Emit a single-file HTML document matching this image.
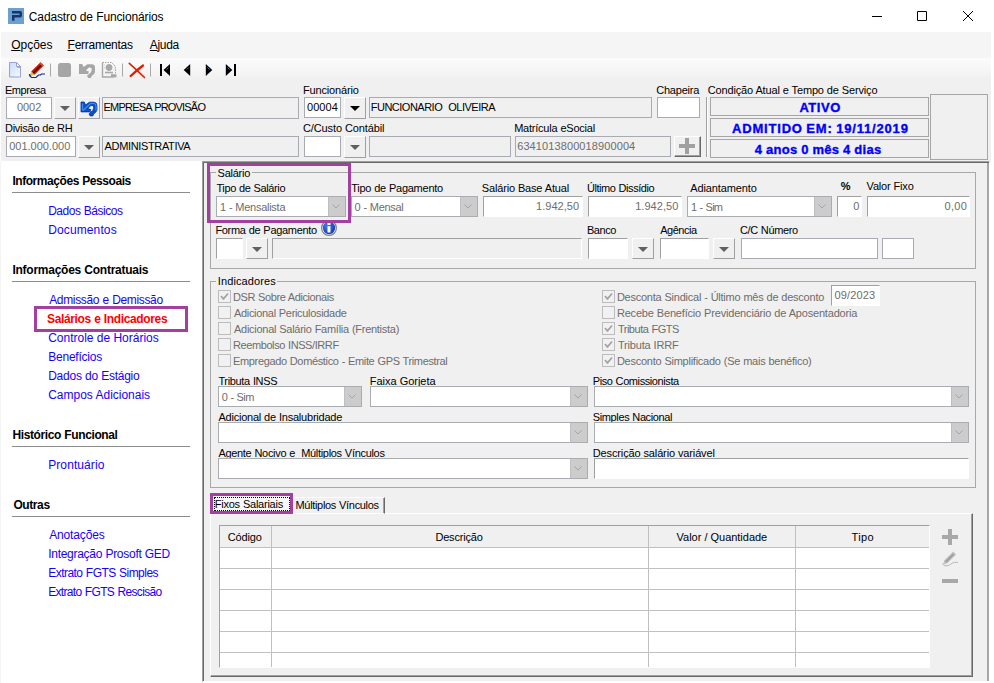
<!DOCTYPE html>
<html lang="pt-BR">
<head>
<meta charset="utf-8">
<title>Cadastro de Funcionários</title>
<style>
html,body{margin:0;padding:0}
body{width:994px;height:683px;position:relative;overflow:hidden;background:#fff;font-family:"Liberation Sans",sans-serif;font-size:11px;color:#000}
.a{position:absolute;box-sizing:border-box}
.t{position:absolute;white-space:pre;font-size:11px;line-height:13px}
.s{position:absolute;white-space:pre;font-size:12px;line-height:15px}
.f{position:absolute;box-sizing:border-box;background:#fff;border:1px solid #a9abb2;height:21px}
.h22{height:22px}
.g{background:#f0f0f0}
.w{border-color:#a0a0a0 #fff #fff #a0a0a0;height:21px}
.e{height:21px}
.gr{color:#6d6d6d}
.b{position:absolute;box-sizing:border-box;background:#f0f0f0;border:1px solid;border-color:#fff #a0a0a0 #a0a0a0 #fff;height:22px;width:22px}
.b i{position:absolute;left:5.3px;top:8px;width:0;height:0;border-left:5.2px solid transparent;border-right:5.2px solid transparent;border-top:5.2px solid #606060}
.b i.k{border-top-color:#000}
.cb{position:absolute;box-sizing:border-box;background:#fff;border:1px solid #a9adb2;height:21px}
.cb u{position:absolute;right:0;top:0;width:17px;height:19px;background:#cccccc;border-left:1px solid #bfbfbf;box-sizing:border-box}
.cb u svg{position:absolute;left:3px;top:7px}
.gb{position:absolute;box-sizing:border-box;border:1px solid #a8a8a8}
.gl{position:absolute;background:#f0f0f0;height:13px}
.ck{position:absolute;box-sizing:border-box;width:13px;height:13px;border:1px solid #bcbcbc;background:#f1f1f1}
.nav{color:#1800fa}
.hd{font-weight:bold}
.hl{position:absolute;height:1px;background:#8c8c8c;left:12px;width:178px}
.st{position:absolute;box-sizing:border-box;width:219px;height:19px;border:1px solid #a6a6a6;left:710px}
.sb{font-weight:bold;font-size:13px;line-height:17px;color:#0000ff;-webkit-text-stroke:0.35px #0000ff}
.pb{position:absolute;box-sizing:border-box;border:3px solid #a23fa0}
</style>
</head>
<body>
<div class="a" style="left:0;top:0;width:994px;height:32px;background:#fff"></div>
<svg class="a" style="left:8px;top:8px" width="16" height="16" viewBox="0 0 16 16"><rect width="16" height="16" fill="#6c9fd2"/><path d="M4 3h8a2 2 0 0 1 2 2v2.500a2 2 0 0 1-2 2H6.500v3.300H4V7h7.500V5.600H4z" fill="#17356e"/></svg>
<div class="s" style="left:28.8px;top:10px;letter-spacing:-0.13px;word-spacing:0.13px">Cadastro de Funcionários</div>
<svg class="a" style="left:860px;top:0" width="134" height="32" viewBox="0 0 134 32"><path d="M12 16.500h10M57.500 11.500h9v9h-9zM103 11l10 10M113 11l-10 10" stroke="#000" stroke-width="1" fill="none"/></svg>
<div class="a" style="left:1px;top:32px;width:990px;height:26px;background:#f5f5f5"></div>
<div class="s" style="left:11.2px;top:38px;letter-spacing:-0.02px"><span style="text-decoration:underline">O</span>pções</div>
<div class="s" style="left:67.6px;top:38px;letter-spacing:-0.26px"><span style="text-decoration:underline">F</span>erramentas</div>
<div class="s" style="left:149.8px;top:38px;letter-spacing:-0.32px"><span style="text-decoration:underline">A</span>juda</div>
<div class="a" style="left:1px;top:58px;width:990px;height:103px;background:linear-gradient(#fcfcfc 0,#f0f0f0 22px)"></div>
<svg class="a" style="left:0;top:58px" width="250" height="24" viewBox="0 58 250 24">
<defs><linearGradient id="pg" x1="0" y1="0" x2="1" y2="1"><stop offset="0" stop-color="#c6dcfc"/><stop offset="1" stop-color="#f6f9ff"/></linearGradient></defs>
<path d="M9.500 62.500h7l4 4v10.500h-11z" fill="url(#pg)" stroke="#98a2cc"/><path d="M16.500 62.500v4h4z" fill="#fff" stroke="#98a2cc"/><path d="M17 67.500h3" stroke="#a8b4c8"/>
<path d="M40.500 62.200l3.300 3.300l-9.300 9.300l-3.300-3.300z" fill="#c81800"/><path d="M41.800 63.500l1 1l-9.300 9.300l-1-1z" fill="#401000"/><path d="M40.500 62.200l3.300 3.300l-1.200 1.200l-3.300-3.300z" fill="#e05040"/><path d="M31.200 71.500l3.300 3.300l-4.500 1.300z" fill="#e8c020"/>
<path d="M29.500 75.500l2 2h4.500l2.500-2.500h2l1-1h3.500" fill="none" stroke="#0828a0" stroke-width="1.100"/><path d="M29 74.500l1.500 1" stroke="#000" stroke-width="1.200"/>
<path d="M50.500 63.500v13M122.500 63.500v13M150.500 63.500v13" stroke="#a8a8a8"/>
<rect x="58" y="63" width="13" height="14" rx="2.500" fill="#a6a6a6"/>
<path transform="translate(79 64)" d="M0 0L3.200 0L4.600 3L8.400 0.200L12.900 0.200Q16 0.500 16 3.500L16 8Q15.500 10 12.900 11.800L11.800 13.900L9.100 13.900L8 11.800L11.800 8.400Q13.500 6 12.500 4Q11 3 9.500 3.800L6.900 6.500L9.900 7.600L9.100 9.900L0 9.900Z" fill="#a6a6a6"/>
<g stroke="#a8a8a8" fill="none"><path d="M102.500 62.500h9l4 4v7" stroke-dasharray="1.500 1"/><path d="M102.500 62.500v14.500h11" stroke-width="1.400"/><circle cx="109" cy="67.500" r="3" fill="#a8a8a8"/><path d="M105 72.500h8" stroke-width="1.600"/><path d="M111 75.500l5.500 0.500" stroke-width="3"/><path d="M104 65h1M104 68h1M113 64.500h1M113.500 69h1" stroke="#c8c8c8"/></g>
<path d="M129.300 63.300c4 3.500 9.500 8.500 15.200 14.200" stroke="#e41c00" stroke-width="1.600" fill="none" stroke-linecap="round"/><path d="M143 65.500c-4 3-8 6.500-12.300 10.500" stroke="#e41c00" stroke-width="2.300" fill="none" stroke-linecap="round"/>
<g fill="#000"><rect x="160" y="64" width="2" height="12"/><path d="M163.500 70l6.500-6v12z"/><path d="M183.700 70l6.500-6v12z"/><path d="M212.300 70l-6.500-6v12z"/><path d="M232.300 70l-6.500-6v12z"/><rect x="234" y="64" width="2" height="12"/></g>
<g stroke="#5090e0" stroke-width="0.800"><path d="M166.500 69.500l2-2M186.700 69.500l2-2M209.500 69.500l-2-2M229.500 69.500l-2-2"/></g>
</svg>
<div class="t" style="left:5px;top:84px;letter-spacing:-0.47px">Empresa</div>
<div class="f h22" style="left:6px;top:97px;width:46px"></div>
<div class="t gr" style="left:17px;top:101px;letter-spacing:-0.07px">0002</div>
<div class="b" style="left:54px;top:97px"><i></i></div>
<div class="b" style="left:78px;top:97px"><svg style="position:absolute;left:1px;top:3px" width="18" height="16" viewBox="-1 -1 18 16"><path d="M0 0L3.200 0L4.600 3L8.400 0.200L12.900 0.200Q16 0.500 16 3.500L16 8Q15.500 10 12.900 11.800L11.800 13.900L9.100 13.900L8 11.800L11.800 8.400Q13.500 6 12.500 4Q11 3 9.500 3.800L6.900 6.500L9.900 7.600L9.100 9.900L0 9.900Z" fill="#0a50c8" stroke="#0034a4" stroke-width="0.800"/><path d="M1.500 1.500v7M2 8.500l7.500-7h3.500q2 0.500 2 2.500v4.500" stroke="#3c90f0" stroke-width="1.200" fill="none"/></svg></div>
<div class="f g h22" style="left:102px;top:97px;width:197px"></div>
<div class="t" style="left:103.6px;top:101px;letter-spacing:-0.81px;word-spacing:0.81px">EMPRESA PROVISÃO</div>
<div class="t" style="left:303px;top:84px;letter-spacing:-0.17px">Funcionário</div>
<div class="f" style="left:304px;top:97px;width:37px"></div>
<div class="t" style="left:307px;top:101px;letter-spacing:0.05px">00004</div>
<div class="b" style="left:344px;top:97px"><i class="k"></i></div>
<div class="f g" style="left:369px;top:97px;width:283px"></div>
<div class="t" style="left:370.8px;top:101px;letter-spacing:-0.51px;word-spacing:0.51px">FUNCIONARIO  OLIVEIRA</div>
<div class="t" style="left:656.2px;top:84px;letter-spacing:-0.21px">Chapeira</div>
<div class="f" style="left:657px;top:97px;width:43px"></div>
<div class="t" style="left:5px;top:122px;letter-spacing:-0.26px;word-spacing:0.26px">Divisão de RH</div>
<div class="f" style="left:6px;top:136px;width:70px"></div>
<div class="t gr" style="left:9.2px;top:140px">001.000.000</div>
<div class="b" style="left:78px;top:136px"><i></i></div>
<div class="f g" style="left:102px;top:136px;width:197px"></div>
<div class="t" style="left:104.6px;top:140px;letter-spacing:-0.35px">ADMINISTRATIVA</div>
<div class="t" style="left:303px;top:122px;letter-spacing:-0.12px;word-spacing:0.12px">C/Custo Contábil</div>
<div class="f" style="left:304px;top:136px;width:37px"></div>
<div class="b" style="left:344px;top:136px"><i></i></div>
<div class="f g" style="left:369px;top:136px;width:142px"></div>
<div class="t" style="left:514.2px;top:122px;letter-spacing:-0.23px;word-spacing:0.23px">Matrícula eSocial</div>
<div class="f g" style="left:515px;top:136px;width:156px"></div>
<div class="t gr" style="left:517.2px;top:140px;letter-spacing:0.1px">6341013800018900004</div>
<div class="b" style="left:674px;top:136px;width:27px;height:21px;border-color:#fff #696969 #696969 #fff;box-shadow:inset -1px -1px 0 #a0a0a0"><svg style="position:absolute;left:4px;top:1px" width="16" height="16" viewBox="0 0 16 16"><path d="M6 0h4v6h6v4h-6v6H6v-6H0V6h6z" fill="#a0a0a0"/></svg></div>
<div class="t" style="left:707.8px;top:84px;letter-spacing:-0.16px;word-spacing:0.16px">Condição Atual e Tempo de Serviço</div>
<div class="a" style="left:706px;top:97px;width:2px;height:60px;border-left:1px solid #a0a0a0;border-right:1px solid #fff"></div>
<div class="st" style="top:97px"></div>
<div class="t sb" style="left:799.4px;top:99px;letter-spacing:0.55px">ATIVO</div>
<div class="st" style="top:118px"></div>
<div class="t sb" style="left:732px;top:120px;letter-spacing:0.81px;word-spacing:-0.81px">ADMITIDO EM: 19/11/2019</div>
<div class="st" style="top:139px"></div>
<div class="t sb" style="left:754.8px;top:141px;letter-spacing:0.33px;word-spacing:-0.33px">4 anos 0 mês 4 dias</div>
<div class="a" style="left:930px;top:94px;width:58px;height:66px;border:1px solid #a6a6a6"></div>
<div class="a" style="left:0;top:161px;width:1px;height:522px;background:#f4f4f4"></div>
<div class="s hd" style="left:12.4px;top:174px;letter-spacing:-0.44px;word-spacing:0.44px">Informações Pessoais</div>
<div class="hl" style="top:192px"></div>
<div class="s nav" style="left:48.2px;top:204px;letter-spacing:-0.48px;word-spacing:0.48px">Dados Básicos</div>
<div class="s nav" style="left:48.2px;top:223px;letter-spacing:0.12px">Documentos</div>
<div class="s hd" style="left:12.4px;top:263px;letter-spacing:-0.25px;word-spacing:0.25px">Informações Contratuais</div>
<div class="hl" style="top:281px"></div>
<div class="s nav" style="left:49.2px;top:293px;letter-spacing:-0.34px;word-spacing:0.34px">Admissão e Demissão</div>
<div class="pb" style="left:34px;top:306px;width:154px;height:26px"></div>
<div class="s" style="left:47px;top:312px;letter-spacing:-0.36px;word-spacing:0.36px;color:#f00;font-weight:bold">Salários e Indicadores</div>
<div class="s nav" style="left:48.2px;top:331px;letter-spacing:-0.01px;word-spacing:0.01px">Controle de Horários</div>
<div class="s nav" style="left:48.2px;top:350px;letter-spacing:-0.22px">Benefícios</div>
<div class="s nav" style="left:48.2px;top:369px;letter-spacing:-0.25px;word-spacing:0.25px">Dados do Estágio</div>
<div class="s nav" style="left:48.2px;top:388px;letter-spacing:-0.01px;word-spacing:0.01px">Campos Adicionais</div>
<div class="s hd" style="left:12.4px;top:428px;letter-spacing:-0.38px;word-spacing:0.38px">Histórico Funcional</div>
<div class="hl" style="top:446px"></div>
<div class="s nav" style="left:48.2px;top:458px;letter-spacing:0.09px">Prontuário</div>
<div class="s hd" style="left:13.4px;top:498px;letter-spacing:-0.4px">Outras</div>
<div class="hl" style="top:516px"></div>
<div class="s nav" style="left:49.2px;top:528px;letter-spacing:-0.15px">Anotações</div>
<div class="s nav" style="left:48.2px;top:547px;letter-spacing:-0.28px;word-spacing:0.28px">Integração Prosoft GED</div>
<div class="s nav" style="left:48.2px;top:566px;letter-spacing:-0.53px;word-spacing:0.53px">Extrato FGTS Simples</div>
<div class="s nav" style="left:48.2px;top:585px;letter-spacing:-0.67px;word-spacing:0.67px">Extrato FGTS Rescisão</div>
<div class="a" style="left:202px;top:161px;width:788px;height:521px;background:#f0f0f0;border:1px solid;border-color:#a0a0a0 #fff #fff #a0a0a0;box-shadow:inset 1px 1px 0 #696969"></div><div class="a" style="left:987px;top:163px;width:2px;height:518px;background:#a6a6a6"></div>
<div class="gb" style="left:210px;top:172px;width:766px;height:97px"></div>
<div class="gl" style="left:216px;top:167px;width:36px"></div>
<div class="t" style="left:217.6px;top:167px;letter-spacing:-0.25px">Salário</div>
<div class="t" style="left:216.4px;top:182px;letter-spacing:-0.37px;word-spacing:0.37px">Tipo de Salário</div>
<div class="cb" style="left:216px;top:196px;width:130px"><u><svg width="9" height="5" viewBox="0 0 9 5"><path d="M0.500 0.500l3.500 3.500l3.500-3.500" stroke="#a2a6ac" fill="none" stroke-width="1"/></svg></u></div>
<div class="t gr" style="left:220px;top:201px;letter-spacing:-0.27px;word-spacing:0.27px">1 - Mensalista</div>
<div class="t" style="left:351.2px;top:182px;letter-spacing:-0.26px;word-spacing:0.26px">Tipo de Pagamento</div>
<div class="cb" style="left:351px;top:196px;width:127px"><u><svg width="9" height="5" viewBox="0 0 9 5"><path d="M0.500 0.500l3.500 3.500l3.500-3.500" stroke="#a2a6ac" fill="none" stroke-width="1"/></svg></u></div>
<div class="t gr" style="left:354.6px;top:201px;letter-spacing:-0.31px;word-spacing:0.31px">0 - Mensal</div>
<div class="t" style="left:481.8px;top:182px;letter-spacing:-0.17px;word-spacing:0.17px">Salário Base Atual</div>
<div class="f w" style="left:483px;top:196px;width:100px"></div>
<div class="t gr" style="left:536px;top:200px;letter-spacing:0.04px">1.942,50</div>
<div class="t" style="left:586.9px;top:182px;letter-spacing:-0.43px;word-spacing:0.43px">Último Dissídio</div>
<div class="f w" style="left:588px;top:196px;width:94px"></div>
<div class="t gr" style="left:635.2px;top:200px;letter-spacing:0.04px">1.942,50</div>
<div class="t" style="left:690.2px;top:182px;letter-spacing:-0.11px">Adiantamento</div>
<div class="cb" style="left:687px;top:196px;width:145px"><u><svg width="9" height="5" viewBox="0 0 9 5"><path d="M0.500 0.500l3.500 3.500l3.500-3.500" stroke="#a2a6ac" fill="none" stroke-width="1"/></svg></u></div>
<div class="t gr" style="left:691px;top:201px;letter-spacing:-0.7px;word-spacing:0.7px">1 - Sim</div>
<div class="t" style="left:840.8px;top:180px;font-weight:bold">%</div>
<div class="f w" style="left:837px;top:196px;width:25px"></div>
<div class="t gr" style="left:853.2px;top:200px">0</div>
<div class="t" style="left:866.6px;top:180px;letter-spacing:-0.19px;word-spacing:0.19px">Valor Fixo</div>
<div class="f w" style="left:867px;top:196px;width:103px"></div>
<div class="t gr" style="left:944.6px;top:200px;letter-spacing:0.27px">0,00</div>
<div class="t" style="left:215.4px;top:224px;letter-spacing:-0.31px;word-spacing:0.31px">Forma de Pagamento</div>
<svg class="a" style="left:321px;top:220px" width="16" height="16" viewBox="0 0 16 16"><defs><radialGradient id="ig" cx="0.350" cy="0.300" r="0.800"><stop offset="0" stop-color="#4478e8"/><stop offset="1" stop-color="#1238b0"/></radialGradient></defs><circle cx="8" cy="8" r="7.400" fill="#fff" stroke="#808080" stroke-width="1.200"/><circle cx="8" cy="8" r="6.200" fill="url(#ig)"/><rect x="6.500" y="6.200" width="3" height="6.300" fill="#fff"/><rect x="6.500" y="3" width="3" height="2" fill="#fff"/></svg>
<div class="f w" style="left:216px;top:238px;width:27px"></div>
<div class="b" style="left:246px;top:238px;height:21px"><i></i></div>
<div class="f w g" style="left:272px;top:238px;width:310px"></div>
<div class="t" style="left:586.9px;top:224px;letter-spacing:-0.42px">Banco</div>
<div class="f w" style="left:588px;top:238px;width:40px"></div>
<div class="b" style="left:632px;top:238px;height:21px"><i></i></div>
<div class="t" style="left:660.2px;top:224px;letter-spacing:-0.47px">Agência</div>
<div class="f w" style="left:660px;top:238px;width:49px"></div>
<div class="b" style="left:713px;top:238px;height:21px"><i></i></div>
<div class="t" style="left:739.9px;top:224px;letter-spacing:-0.36px;word-spacing:0.36px">C/C Número</div>
<div class="f e" style="left:741px;top:238px;width:137px"></div>
<div class="f e" style="left:882px;top:238px;width:32px"></div>
<div class="pb" style="left:207px;top:163px;width:144px;height:60px"></div>
<div class="gb" style="left:210px;top:281px;width:766px;height:207px"></div>
<div class="gl" style="left:216px;top:275px;width:61px"></div>
<div class="t" style="left:217.8px;top:275px;letter-spacing:0.1px">Indicadores</div>
<div class="ck" style="left:218px;top:290px"><svg width="11" height="11" viewBox="0 0 11 11" style="position:absolute;left:0;top:0"><path d="M2 5.200l2.500 2.600l4.500-5.300" stroke="#a4a4a4" stroke-width="1.800" fill="none"/></svg></div>
<div class="t gr" style="left:233px;top:291px;letter-spacing:-0.41px;word-spacing:0.41px">DSR Sobre Adicionais</div>
<div class="ck" style="left:218px;top:306px"></div>
<div class="t gr" style="left:234px;top:307px;letter-spacing:-0.32px;word-spacing:0.32px">Adicional Periculosidade</div>
<div class="ck" style="left:218px;top:322px"></div>
<div class="t gr" style="left:234px;top:323px;letter-spacing:-0.27px;word-spacing:0.27px">Adicional Salário Família (Frentista)</div>
<div class="ck" style="left:218px;top:338px"></div>
<div class="t gr" style="left:233px;top:339px;letter-spacing:-0.41px;word-spacing:0.41px">Reembolso INSS/IRRF</div>
<div class="ck" style="left:218px;top:354px"></div>
<div class="t gr" style="left:233px;top:355px;letter-spacing:-0.35px;word-spacing:0.35px">Empregado Doméstico - Emite GPS Trimestral</div>
<div class="ck" style="left:602px;top:290px"><svg width="11" height="11" viewBox="0 0 11 11" style="position:absolute;left:0;top:0"><path d="M2 5.200l2.500 2.600l4.500-5.300" stroke="#a4a4a4" stroke-width="1.800" fill="none"/></svg></div>
<div class="t gr" style="left:616.9px;top:291px;letter-spacing:-0.24px;word-spacing:0.24px">Desconta Sindical - Último mês de desconto</div>
<div class="ck" style="left:602px;top:306px"></div>
<div class="t gr" style="left:616.9px;top:307px;letter-spacing:-0.18px;word-spacing:0.18px">Recebe Benefício Previdenciário de Aposentadoria</div>
<div class="ck" style="left:602px;top:322px"><svg width="11" height="11" viewBox="0 0 11 11" style="position:absolute;left:0;top:0"><path d="M2 5.200l2.500 2.600l4.500-5.300" stroke="#a4a4a4" stroke-width="1.800" fill="none"/></svg></div>
<div class="t gr" style="left:617.9px;top:323px;letter-spacing:-0.48px;word-spacing:0.48px">Tributa FGTS</div>
<div class="ck" style="left:602px;top:338px"><svg width="11" height="11" viewBox="0 0 11 11" style="position:absolute;left:0;top:0"><path d="M2 5.200l2.500 2.600l4.500-5.300" stroke="#a4a4a4" stroke-width="1.800" fill="none"/></svg></div>
<div class="t gr" style="left:617.9px;top:339px;letter-spacing:-0.17px;word-spacing:0.17px">Tributa IRRF</div>
<div class="ck" style="left:602px;top:354px"><svg width="11" height="11" viewBox="0 0 11 11" style="position:absolute;left:0;top:0"><path d="M2 5.200l2.500 2.600l4.500-5.300" stroke="#a4a4a4" stroke-width="1.800" fill="none"/></svg></div>
<div class="t gr" style="left:616.9px;top:355px;letter-spacing:-0.25px;word-spacing:0.25px">Desconto Simplificado (Se mais benéfico)</div>
<div class="f w" style="left:831px;top:285px;width:49px;height:21px"></div>
<div class="t gr" style="left:834.6px;top:289px;letter-spacing:0.13px">09/2023</div>
<div class="t" style="left:218.4px;top:375px;letter-spacing:-0.34px;word-spacing:0.34px">Tributa INSS</div>
<div class="t" style="left:369.8px;top:375px;letter-spacing:-0.02px;word-spacing:0.02px">Faixa Gorjeta</div>
<div class="t" style="left:592.8px;top:375px;letter-spacing:-0.41px;word-spacing:0.41px">Piso Comissionista</div>
<div class="t" style="left:218.4px;top:411px;letter-spacing:-0.22px;word-spacing:0.22px">Adicional de Insalubridade</div>
<div class="t" style="left:592.8px;top:411px;letter-spacing:-0.38px;word-spacing:0.38px">Simples Nacional</div>
<div class="t" style="left:218.4px;top:447px;letter-spacing:-0.31px;word-spacing:0.31px">Agente Nocivo e  Múltiplos Vínculos</div>
<div class="t" style="left:592.8px;top:447px;letter-spacing:-0.14px;word-spacing:0.14px">Descrição salário variável</div>
<div class="cb" style="left:218px;top:386px;width:144px"><u><svg width="9" height="5" viewBox="0 0 9 5"><path d="M0.500 0.500l3.500 3.500l3.500-3.500" stroke="#a2a6ac" fill="none" stroke-width="1"/></svg></u></div>
<div class="t gr" style="left:221.8px;top:391px;letter-spacing:-0.57px;word-spacing:0.57px">0 - Sim</div>
<div class="cb" style="left:370px;top:386px;width:218px"><u><svg width="9" height="5" viewBox="0 0 9 5"><path d="M0.500 0.500l3.500 3.500l3.500-3.500" stroke="#a2a6ac" fill="none" stroke-width="1"/></svg></u></div>
<div class="cb" style="left:594px;top:386px;width:375px"><u><svg width="9" height="5" viewBox="0 0 9 5"><path d="M0.500 0.500l3.500 3.500l3.500-3.500" stroke="#a2a6ac" fill="none" stroke-width="1"/></svg></u></div>
<div class="cb" style="left:218px;top:422px;width:370px"><u><svg width="9" height="5" viewBox="0 0 9 5"><path d="M0.500 0.500l3.500 3.500l3.500-3.500" stroke="#a2a6ac" fill="none" stroke-width="1"/></svg></u></div>
<div class="cb" style="left:594px;top:422px;width:375px"><u><svg width="9" height="5" viewBox="0 0 9 5"><path d="M0.500 0.500l3.500 3.500l3.500-3.500" stroke="#a2a6ac" fill="none" stroke-width="1"/></svg></u></div>
<div class="cb" style="left:218px;top:458px;width:370px"><u><svg width="9" height="5" viewBox="0 0 9 5"><path d="M0.500 0.500l3.500 3.500l3.500-3.500" stroke="#a2a6ac" fill="none" stroke-width="1"/></svg></u></div>
<div class="f w" style="left:594px;top:458px;width:375px"></div>
<div class="a" style="left:210px;top:513px;width:763px;height:164px;border:1px solid;border-color:#fff #696969 #696969 #fff;box-shadow:inset -1px -1px 0 #a0a0a0"></div>
<div class="a" style="left:293px;top:497px;width:92px;height:17px;border:1px solid;border-color:#fff #696969 transparent #fff;box-shadow:inset -1px 0 0 #a0a0a0"></div>
<div class="t" style="left:295.5px;top:499px;letter-spacing:-0.32px;word-spacing:0.32px">Múltiplos Vínculos</div>
<div class="pb" style="left:210px;top:493px;width:83px;height:21px;background:#f7f7f7"></div>
<div class="a" style="left:214px;top:497px;width:76px;height:14px;border:1px dotted #000"></div>
<div class="t" style="left:214.8px;top:498px;letter-spacing:-0.24px;word-spacing:0.24px">Fixos Salariais</div>
<div class="a" style="left:219px;top:525px;width:711px;height:143px;background:#fff;border:1px solid;border-color:#a0a0a0 #fff #fff #a0a0a0;overflow:hidden"><div class="a" style="left:0;top:0;width:709px;height:21px;background:#f0f0f0"></div><div class="a" style="left:0;top:21px;width:709px;height:1px;background:#c0c0c0"></div><div class="a" style="left:0;top:42px;width:709px;height:1px;background:#c0c0c0"></div><div class="a" style="left:0;top:63px;width:709px;height:1px;background:#c0c0c0"></div><div class="a" style="left:0;top:84px;width:709px;height:1px;background:#c0c0c0"></div><div class="a" style="left:0;top:105px;width:709px;height:1px;background:#c0c0c0"></div><div class="a" style="left:0;top:126px;width:709px;height:1px;background:#c0c0c0"></div><div class="a" style="left:51px;top:0;width:1px;height:141px;background:#c0c0c0"></div><div class="a" style="left:428px;top:0;width:1px;height:141px;background:#c0c0c0"></div><div class="a" style="left:575px;top:0;width:1px;height:141px;background:#c0c0c0"></div><div class="a" style="left:709px;top:0;width:1px;height:141px;background:#c0c0c0"></div></div>
<div class="t" style="left:227.8px;top:531px;letter-spacing:-0.18px">Código</div>
<div class="t" style="left:435.4px;top:531px;letter-spacing:-0.19px">Descrição</div>
<div class="t" style="left:676.6px;top:531px;letter-spacing:-0.02px;word-spacing:0.02px">Valor / Quantidade</div>
<div class="t" style="left:851.6px;top:531px;letter-spacing:0.33px">Tipo</div>
<svg class="a" style="left:942px;top:529px" width="16" height="54" viewBox="0 0 16 54"><path d="M6 0h4v6h6v4h-6v6H6v-6H0V6h6z" fill="#a8a8a8"/><rect x="0" y="50" width="16" height="4" fill="#a8a8a8"/><path d="M11.200 22.500l3 3l-8.800 8.800l-4.200 1.200l1.200-4.200z" fill="#c0c0c0"/><path d="M11 24.500l1.200 1.200l-8 8l-1.200-1.200z" fill="#9c9c9c"/><path d="M0.500 34.500c1.500 3 5 3 8 0.800s5-2.300 7.500-1.800" stroke="#b4b4b4" fill="none" stroke-width="1"/></svg>
</body>
</html>
